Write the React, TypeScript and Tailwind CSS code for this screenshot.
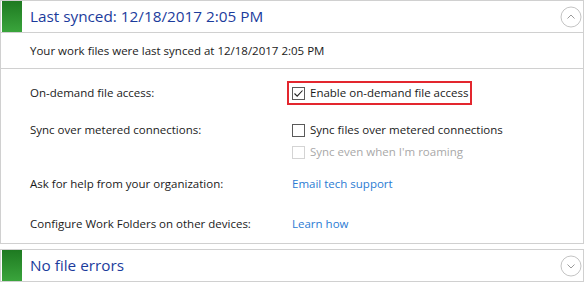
import React from "react";

function CircleChevron({ up }: { up?: boolean }) {
    return (
        <svg width="22" height="22" viewBox="0 0 22 22" className="shrink-0">
            <circle cx="11" cy="11" r="10" fill="none" stroke="#c4c4c4" strokeWidth="1" />
            {up ? (
                <path d="M7.5 12.5 L11 9 L14.5 12.5" fill="none" stroke="#9a9a9a" strokeWidth="1" />
            ) : (
                <path d="M7.5 9.5 L11 13 L14.5 9.5" fill="none" stroke="#9a9a9a" strokeWidth="1" />
            )}
        </svg>
    );
}

function Checkbox({ checked, disabled }: { checked?: boolean; disabled?: boolean }) {
    return (
        <div
            className={`w-[13px] h-[13px] border shrink-0 flex items-center justify-center bg-white ${
                disabled ? "border-[#d4d4d4]" : "border-[#5a5a5a]"
            }`}
        >
            {checked && (
                <svg width="11" height="11" viewBox="0 0 11 11">
                    <path d="M1.5 5.5 L4.2 8.2 L9.5 2.5" fill="none" stroke="#222" strokeWidth="1.1" />
                </svg>
            )}
        </div>
    );
}

function Header({ title, up }: { title: string; up?: boolean }) {
    return (
        <div className="flex h-[31px] items-center">
            <div className="ml-[1px] w-[20px] h-[31px] bg-gradient-to-b from-[#1e7a21] to-[#3aa53c]" />
            <span className="ml-[8px] text-[15.3px] text-[#1b3b9c] leading-none">{title}</span>
            <div className="ml-auto mr-[1px]">
                <CircleChevron up={up} />
            </div>
        </div>
    );
}

export default function App() {
    return (
        <div className="w-[585px] h-[284px] bg-white overflow-hidden font-['Segoe_UI','Open_Sans',sans-serif] text-[11.5px] text-[#1a1a1a] whitespace-nowrap">
            {/* Sync panel */}
            <div className="w-[584px] border border-[#d0d0d0]">
                <Header title="Last synced: 12/18/2017 2:05 PM" up />
                <div className="h-[36px] border-t border-[#d0d0d0] flex items-center pl-[29px]">
                    Your work files were last synced at 12/18/2017 2:05 PM
                </div>
                <div className="border-t border-[#d0d0d0] pb-[8px]">
                    <div className="h-[48px] flex items-center">
                        <div className="w-[286px] shrink-0 pl-[29px]">On-demand file access:</div>
                        <div className="flex items-center gap-[5px] border-2 border-[#e3262e] h-[24px] pl-[3px] pr-[2px]">
                            <Checkbox checked />
                            <span>Enable on-demand file access</span>
                        </div>
                    </div>
                    <div className="pt-[2px] flex">
                        <div className="w-[291px] shrink-0 pl-[29px] h-[22px] flex items-center">
                            Sync over metered connections:
                        </div>
                        <div className="flex flex-col">
                            <div className="h-[22px] flex items-center gap-[5px]">
                                <Checkbox />
                                <span>Sync files over metered connections</span>
                            </div>
                            <div className="h-[22px] flex items-center gap-[5px] text-[#a8a8a8]">
                                <Checkbox disabled />
                                <span>Sync even when I'm roaming</span>
                            </div>
                        </div>
                    </div>
                    <div className="mt-[10px] h-[22px] flex items-center">
                        <div className="w-[291px] shrink-0 pl-[29px]">Ask for help from your organization:</div>
                        <a className="text-[#2b7bd3]">Email tech support</a>
                    </div>
                    <div className="mt-[18px] h-[22px] flex items-center">
                        <div className="w-[291px] shrink-0 pl-[29px]">Configure Work Folders on other devices:</div>
                        <a className="text-[#2b7bd3]">Learn how</a>
                    </div>
                </div>
            </div>

            {/* Errors panel */}
            <div className="mt-[5px] w-[584px] border border-[#d0d0d0]">
                <Header title="No file errors" />
            </div>
        </div>
    );
}
